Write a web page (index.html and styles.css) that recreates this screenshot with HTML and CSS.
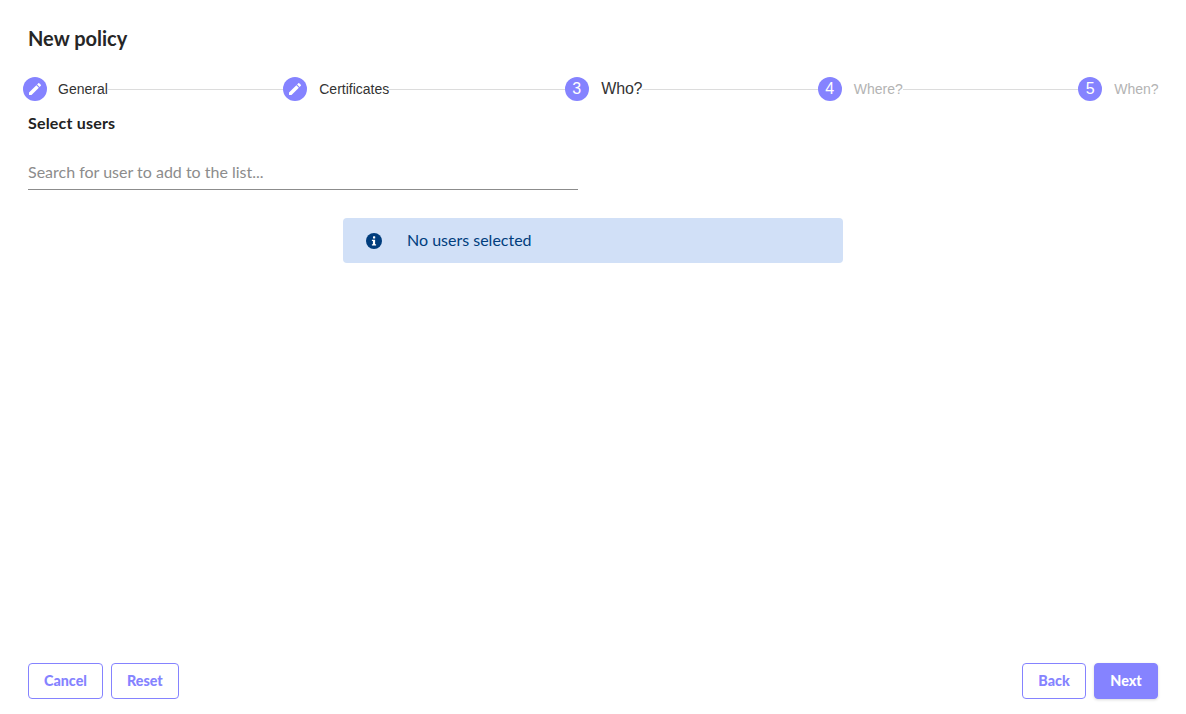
FILE: index.html
```html
<!DOCTYPE html>
<html lang="en">
<head>
<meta charset="utf-8">
<title>New policy</title>
<link rel="stylesheet" href="styles.css">
</head>
<body>
<main class="page">
  <h1 class="title">New policy</h1>
  <ol class="stepper">
    <li class="step">
      <span class="dot"><svg class="pen" viewBox="0 0 24 24"><path d="M3 17.25V21h3.75L17.81 9.94l-3.75-3.75L3 17.25zM20.71 7.04a1 1 0 0 0 0-1.41l-2.34-2.34a1 1 0 0 0-1.41 0l-1.83 1.83 3.75 3.75 1.83-1.83z"/></svg></span>
      <span class="label label-first">General</span>
    </li>
    <li class="line"></li>
    <li class="step">
      <span class="dot"><svg class="pen" viewBox="0 0 24 24"><path d="M3 17.25V21h3.75L17.81 9.94l-3.75-3.75L3 17.25zM20.71 7.04a1 1 0 0 0 0-1.41l-2.34-2.34a1 1 0 0 0-1.41 0l-1.83 1.83 3.75 3.75 1.83-1.83z"/></svg></span>
      <span class="label">Certificates</span>
    </li>
    <li class="line"></li>
    <li class="step">
      <span class="dot">3</span>
      <span class="label label-active">Who?</span>
    </li>
    <li class="line"></li>
    <li class="step">
      <span class="dot">4</span>
      <span class="label label-todo">Where?</span>
    </li>
    <li class="line"></li>
    <li class="step">
      <span class="dot">5</span>
      <span class="label label-todo">When?</span>
    </li>
  </ol>
  <h2 class="section">Select users</h2>
  <div class="search">Search for user to add to the list...</div>
  <div class="notice-row">
    <div class="notice">
      <svg class="info" viewBox="0 0 16 16"><circle cx="8" cy="8" r="8" fill="#003d7d"/><rect x="7" y="3.2" width="2.2" height="2.2" rx=".5" fill="#fff"/><path d="M5.9 6.7h3.2v4.6h1v1.3H5.9v-1.3h1V8H5.9z" fill="#fff"/></svg>
      <span class="notice-text">No users selected</span>
    </div>
  </div>
  <footer class="actions">
    <div class="group">
      <button class="btn">Cancel</button>
      <button class="btn">Reset</button>
    </div>
    <div class="group">
      <button class="btn">Back</button>
      <button class="btn btn-primary">Next</button>
    </div>
  </footer>
</main>
</body>
</html>
```
FILE: styles.css
```css
* { box-sizing: border-box; }
html, body { margin: 0; height: 100%; background: #fff; }
body { font-family: Lato, "Open Sans", sans-serif; color: #222; }
.page {
  height: 714px;
  display: flex;
  flex-direction: column;
  padding: 26px 28px 15px;
}
.title {
  margin: 0;
  font-size: 20px;
  line-height: 24px;
  font-weight: 700;
  color: #262626;
}
.stepper {
  list-style: none;
  margin: 27px -0.6px 0 -5px;
  padding: 0;
  display: flex;
  align-items: center;
  height: 24px;
}
.step { display: flex; align-items: center; }
.dot {
  width: 24px;
  height: 24px;
  border-radius: 50%;
  background: #8583ff;
  color: #fff;
  font-family: "Liberation Sans", sans-serif;
  font-size: 16px;
  display: flex;
  align-items: center;
  justify-content: center;
  flex: none;
}
.pen { width: 16px; height: 16px; fill: #fff; }
.label {
  margin-left: 12px;
  font-family: "Liberation Sans", sans-serif;
  font-size: 14px;
  color: #333;
}
.label-first { margin-left: 11px; }
.label-active { font-size: 16px; letter-spacing: -0.2px; margin-left: 12.6px; }
.label-todo { color: #b3b3b3; }
.line { flex: 1; height: 1px; background: #dcdcdc; }
.section {
  margin: 13px 0 0;
  font-size: 16px;
  letter-spacing: 0.2px;
  line-height: 18px;
  font-weight: 700;
  color: #222;
}
.search {
  margin-top: 29px;
  width: 550px;
  height: 29px;
  border-bottom: 1px solid #8c8c8c;
  font-size: 16px;
  line-height: 22px;
  color: #8c8c8c;
}
.notice-row { margin-top: 28px; display: flex; justify-content: center; }
.notice {
  width: 500px;
  height: 45px;
  background: #d1e0f7;
  border-radius: 4px;
  display: flex;
  align-items: center;
  padding-left: 23px;
}
.info { width: 16px; height: 16px; flex: none; }
.notice-text { margin: 0 0 2px 25px; font-size: 16px; color: #003d7d; }
.actions {
  margin-top: auto;
  display: flex;
  justify-content: space-between;
}
.group { display: flex; gap: 8px; }
.btn {
  min-width: 64px;
  height: 36px;
  padding: 0 15px 2px;
  border: 1px solid #8583ff;
  border-radius: 4px;
  background: #fff;
  color: #8583ff;
  font-family: Lato, sans-serif;
  font-size: 14.3px;
  font-weight: 900;
}
.btn-primary {
  background: #8583ff;
  color: #fff;
  box-shadow: 0 1px 3px rgba(0,0,0,.15);
}
```
